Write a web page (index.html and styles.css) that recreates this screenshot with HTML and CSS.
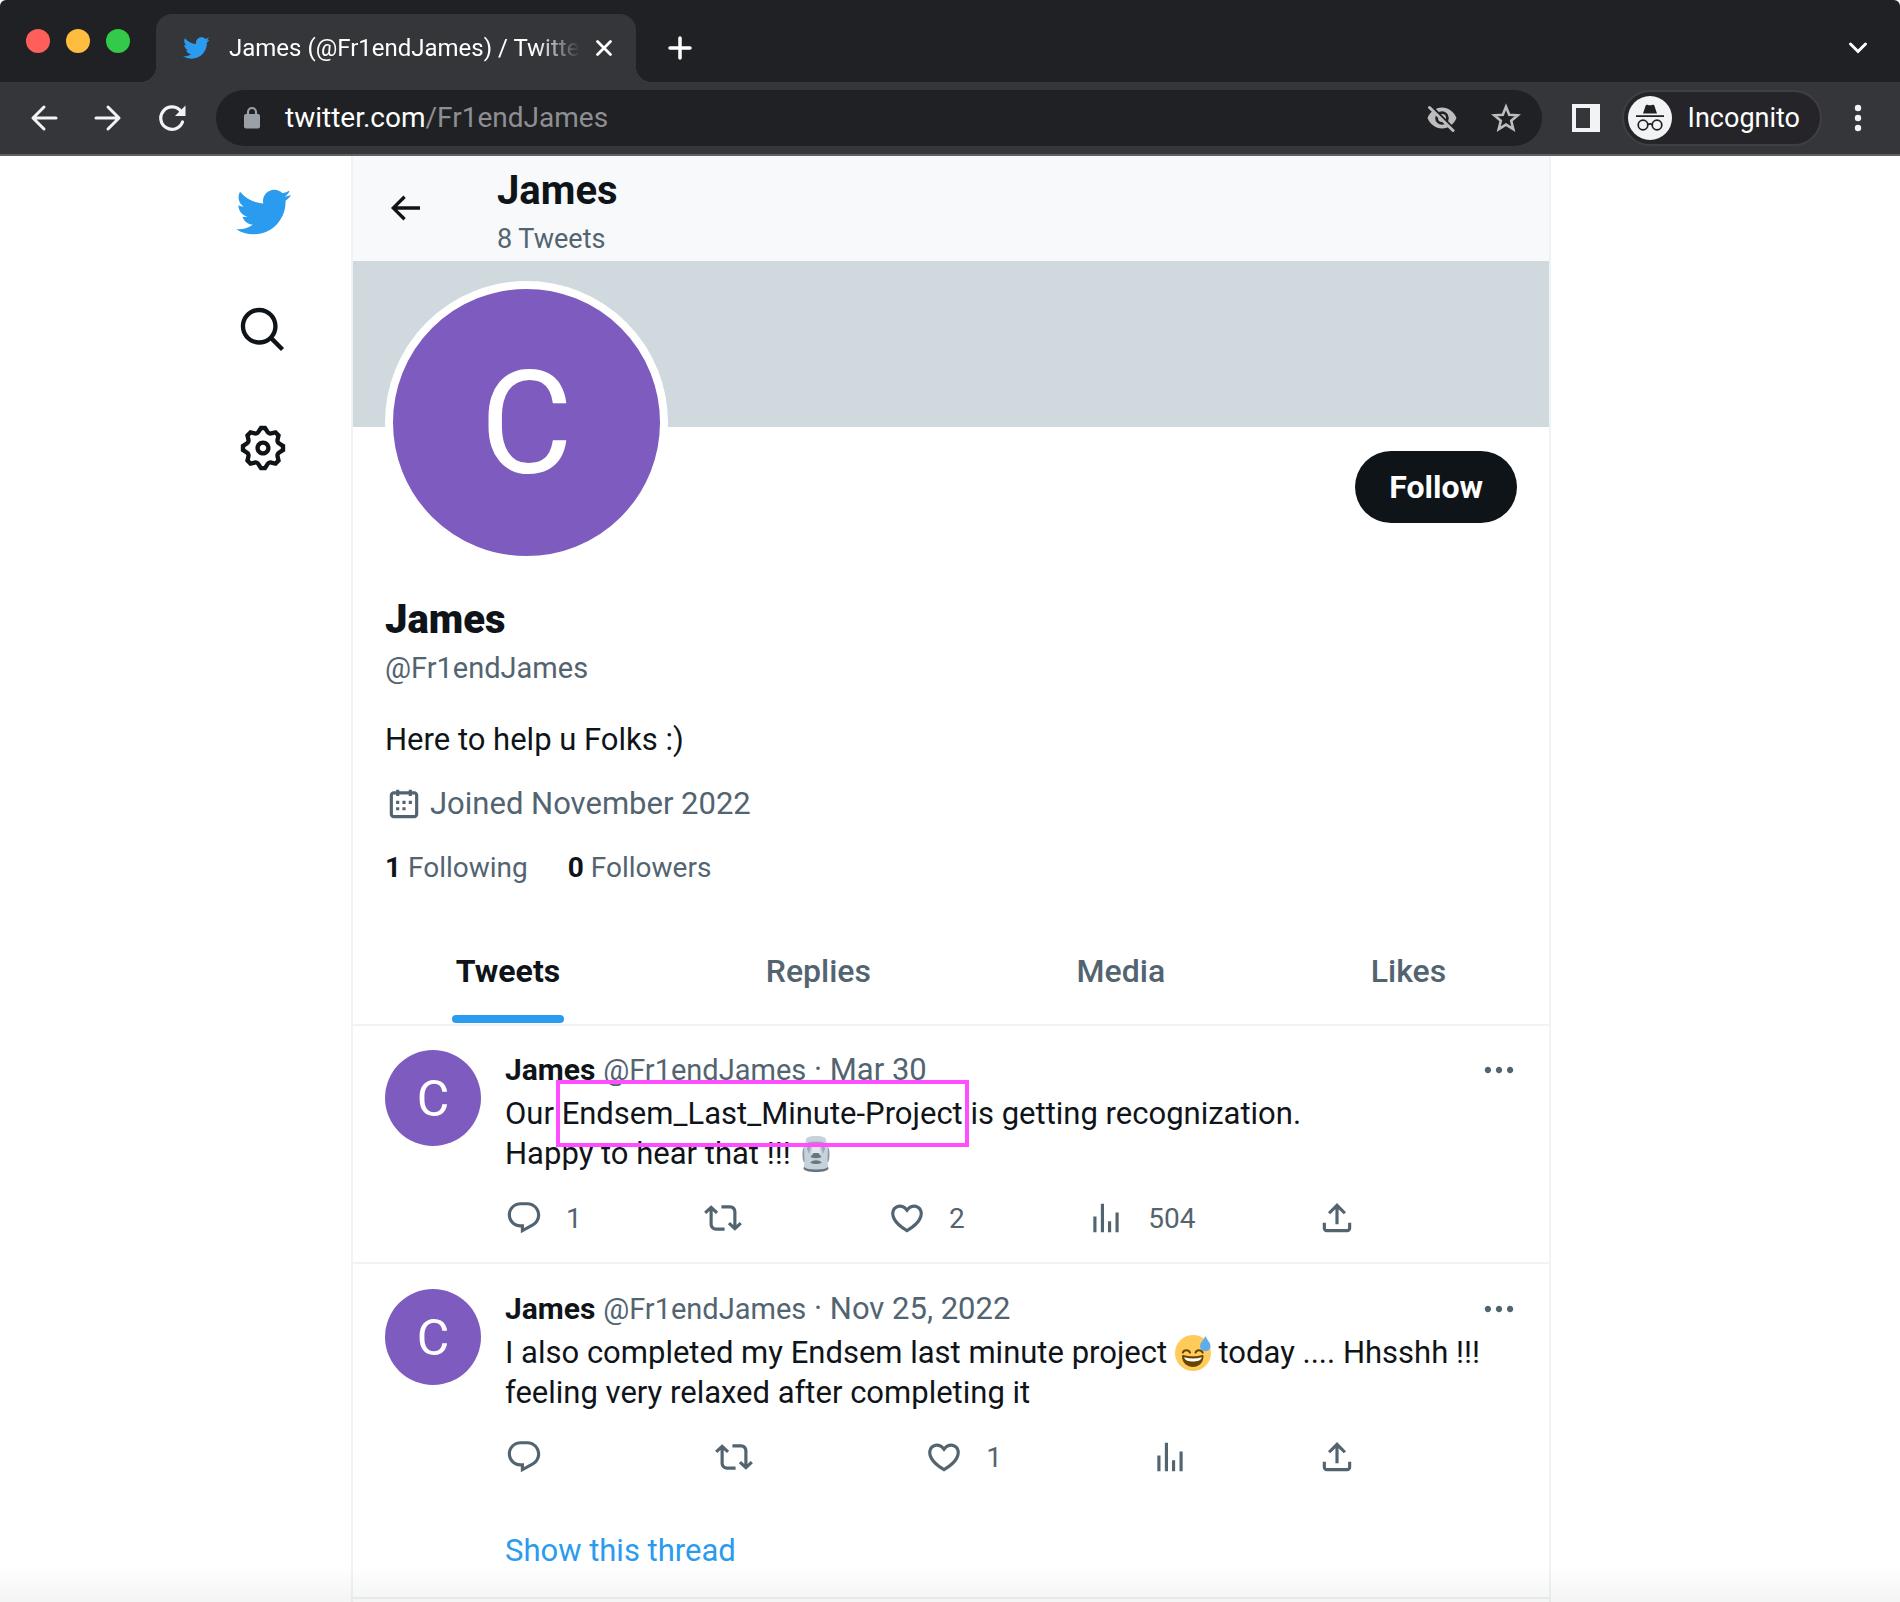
FILE: index.html
```html
<!DOCTYPE html>
<html lang="en">
<head>
<meta charset="utf-8">
<meta name="viewport" content="width=device-width, initial-scale=1">
<title>James (@Fr1endJames) / Twitter</title>
<link rel="stylesheet" href="styles.css">
</head>
<body>
<svg class="sprite" aria-hidden="true">
  <symbol id="bird" viewBox="0 0 24 24"><path d="M23.643 4.937c-.835.37-1.732.62-2.675.733.962-.576 1.7-1.49 2.048-2.578-.9.534-1.897.922-2.958 1.13-.85-.904-2.06-1.47-3.4-1.47-2.572 0-4.658 2.086-4.658 4.66 0 .364.042.718.12 1.06-3.873-.195-7.304-2.05-9.602-4.868-.4.69-.63 1.49-.63 2.342 0 1.616.823 3.043 2.072 3.878-.764-.025-1.482-.234-2.11-.583v.06c0 2.257 1.605 4.14 3.737 4.568-.392.106-.803.162-1.227.162-.3 0-.593-.028-.877-.082.593 1.85 2.313 3.198 4.352 3.234-1.595 1.25-3.604 1.995-5.786 1.995-.376 0-.747-.022-1.112-.065 2.062 1.323 4.51 2.093 7.14 2.093 8.57 0 13.255-7.098 13.255-13.254 0-.2-.005-.402-.014-.602.91-.658 1.7-1.477 2.323-2.41z"/></symbol>
  <symbol id="reply" viewBox="0 0 24 24"><path d="M1.751 10c0-4.42 3.584-8 8.005-8h4.366c4.49 0 8.129 3.64 8.129 8.13 0 2.96-1.607 5.68-4.196 7.11l-8.054 4.46v-3.69h-.067c-4.49.1-8.183-3.51-8.183-8.01zm8.005-6c-3.317 0-6.005 2.69-6.005 6 0 3.37 2.77 6.08 6.138 6.01l.351-.01h1.761v2.3l5.087-2.81c1.951-1.08 3.163-3.13 3.163-5.36 0-3.39-2.744-6.13-6.129-6.13H9.756z"/></symbol>
  <symbol id="retweet" viewBox="0 0 24 24"><path d="M4.5 3.88l4.432 4.14-1.364 1.46L5.5 7.55V16c0 1.1.896 2 2 2H13v2H7.5c-2.209 0-4-1.79-4-4V7.55L1.432 9.48.068 8.02 4.5 3.88zM16.5 6H11V4h5.5c2.209 0 4 1.79 4 4v8.45l2.068-1.93 1.364 1.46-4.432 4.14-4.432-4.14 1.364-1.46 2.068 1.93V8c0-1.1-.896-2-2-2z"/></symbol>
  <symbol id="heart" viewBox="0 0 24 24"><path d="M16.697 5.5c-1.222-.06-2.679.51-3.89 2.16l-.805 1.09-.806-1.09C9.984 6.01 8.526 5.44 7.304 5.5c-1.243.07-2.349.78-2.91 1.91-.552 1.12-.633 2.78.479 4.82 1.074 1.97 3.257 4.27 7.129 6.61 3.87-2.34 6.052-4.64 7.126-6.61 1.111-2.04 1.03-3.7.477-4.82-.561-1.13-1.666-1.84-2.908-1.91zm4.187 7.69c-1.351 2.48-4.001 5.12-8.379 7.67l-.503.3-.504-.3c-4.379-2.55-7.029-5.19-8.382-7.67-1.36-2.5-1.41-4.86-.514-6.67.887-1.79 2.647-2.91 4.601-3.01 1.651-.09 3.368.56 4.798 2.01 1.429-1.45 3.146-2.1 4.796-2.01 1.954.1 3.714 1.22 4.601 3.01.896 1.81.846 4.17-.514 6.67z"/></symbol>
  <symbol id="views" viewBox="0 0 24 24"><path d="M8.75 21V3h2v18h-2zM18 21V8.500h2V21h-2zM4 21l.004-10h2L6 21H4zm9.248 0v-7h2v7h-2z"/></symbol>
  <symbol id="share" viewBox="0 0 24 24"><path d="M12 2.590l5.700 5.700-1.410 1.420L13 6.410V16h-2V6.410l-3.300 3.300-1.410-1.420L12 2.590zM21 15l-.02 3.510c0 1.380-1.120 2.490-2.500 2.490H5.500C4.110 21 3 19.880 3 18.500V15h2v3.500c0 .28.22.5.5.5h12.980c.28 0 .5-.22.5-.5L19 15h2z"/></symbol>
  <symbol id="dots" viewBox="0 0 24 24"><path d="M3 12c0-1.100.9-2 2-2s2 .9 2 2-.9 2-2 2-2-.9-2-2zm9 2c1.100 0 2-.9 2-2s-.9-2-2-2-2 .9-2 2 .9 2 2 2zm7 0c1.100 0 2-.9 2-2s-.9-2-2-2-2 .9-2 2 .9 2 2 2z"/></symbol>
</svg>

<div class="tabstrip">
  <div class="lights"><span class="light red"></span><span class="light yellow"></span><span class="light green"></span></div>
  <div class="browser-tab">
    <svg class="favicon" aria-hidden="true"><use href="#bird"/></svg>
    <span class="tab-title">James (@Fr1endJames) / Twitter</span>
    <button class="bare tab-close" aria-label="Close tab"><svg width="18" height="18" viewBox="0 0 18 18" fill="none" stroke="currentColor" stroke-width="2.800" stroke-linecap="round"><path d="M2.500 2.500l13 13M15.500 2.500l-13 13"/></svg></button>
  </div>
  <button class="bare new-tab" aria-label="New tab"><svg width="24" height="24" viewBox="0 0 24 24" fill="none" stroke="currentColor" stroke-width="3.500" stroke-linecap="round"><path d="M12 2v20M2 12h20"/></svg></button>
  <button class="bare tab-menu" aria-label="Search tabs"><svg width="20" height="14" viewBox="0 0 20 14" fill="none" stroke="currentColor" stroke-width="3" stroke-linecap="round" stroke-linejoin="miter"><path d="M2.500 3l7.500 7.500L17.500 3"/></svg></button>
</div>

<div class="toolbar">
  <div class="history">
    <button class="bare tool" aria-label="Back"><svg width="28" height="28" viewBox="0 0 28 28" fill="none" stroke="currentColor" stroke-width="3" stroke-linecap="round" stroke-linejoin="round"><path d="M26 14H3M14 3L3 14l11 11"/></svg></button>
    <button class="bare tool" aria-label="Forward"><svg width="28" height="28" viewBox="0 0 28 28" fill="none" stroke="currentColor" stroke-width="3" stroke-linecap="round" stroke-linejoin="round"><path d="M2 14h23M14 3l11 11-11 11"/></svg></button>
    <button class="bare tool" aria-label="Reload"><svg width="28" height="28" viewBox="0 0 28 28"><path d="M24.500 18a11.200 11.200 0 1 1-1.500-10.500" fill="none" stroke="currentColor" stroke-width="3.200" stroke-linecap="round"/><path d="M27.500 1.500v10.500H17z" fill="currentColor"/></svg></button>
  </div>
  <div class="omnibox">
    <svg width="18" height="24" viewBox="0 0 18 24" aria-hidden="true"><rect x="1" y="8" width="16" height="14.500" rx="2" fill="#9aa0a6"/><path d="M5 9V6a4 4 0 0 1 8 0v3" fill="none" stroke="#9aa0a6" stroke-width="2.200"/></svg>
    <span class="url">twitter.com<span class="url-path">/Fr1endJames</span></span>
    <button class="bare omni-btn" aria-label="Third-party cookies blocked"><svg width="32" height="28" viewBox="0 0 32 28"><path fill="currentColor" fill-rule="evenodd" d="M16 3.500C22.500 3.500 28 7.800 30.500 14 28 20.200 22.500 24.500 16 24.500S4 20.200 1.500 14C4 7.800 9.500 3.500 16 3.500zM16 7.200a6.800 6.800 0 1 0 0 13.600 6.800 6.800 0 0 0 0-13.600zm0 2.800a4 4 0 1 1 0 8 4 4 0 0 1 0-8z"/><path d="M2 0l27 27" stroke="#202124" stroke-width="4"/><path d="M3.500 3.500L27 26.500" stroke="currentColor" stroke-width="3" stroke-linecap="round"/></svg></button>
    <button class="bare omni-btn" aria-label="Bookmark this tab"><svg width="32" height="32" viewBox="0 0 32 32" fill="none" stroke="currentColor" stroke-width="2.600"><path d="M16 4.800l3.200 7.900 8.500.6-6.500 5.500 2.100 8.300-7.300-4.500-7.300 4.500 2.100-8.300-6.500-5.500 8.500-.6z"/></svg></button>
  </div>
  <button class="bare tool side-panel" aria-label="Side panel"><svg width="28" height="28" viewBox="0 0 28 28"><path fill="currentColor" fill-rule="evenodd" d="M0 0h28v28H0zM4 4v20h14V4z"/></svg></button>
  <button class="incognito"><svg width="44" height="44" viewBox="0 0 44 44" aria-hidden="true"><circle cx="22" cy="22" r="22" fill="#f1f3f4"/><path d="M15 17.500l2.600-7.800c.3-.9 1-1.200 1.800-.9 1.700.7 3.500.7 5.200 0 .8-.3 1.500 0 1.800.9l2.600 7.800zM8 19.200h28v1.900H8z" fill="#202124"/><g fill="none" stroke="#202124" stroke-width="1.700"><circle cx="15" cy="29" r="4.800"/><circle cx="29" cy="29" r="4.800"/><path d="M19.800 28.500q2.200-1.400 4.400 0"/></g></svg><span>Incognito</span></button>
  <button class="bare tool" aria-label="Menu"><svg width="8" height="28" viewBox="0 0 8 28" fill="currentColor"><circle cx="4" cy="4" r="3.200"/><circle cx="4" cy="14" r="3.200"/><circle cx="4" cy="24" r="3.200"/></svg></button>
</div>

<div class="page">
  <nav class="side-nav" aria-label="Primary">
    <a class="nav-item logo" href="#" aria-label="Twitter"><svg><use href="#bird"/></svg></a>
    <a class="nav-item" href="#" aria-label="Explore"><svg viewBox="0 0 24 24"><path d="M10.250 3.750c-3.590 0-6.500 2.910-6.500 6.500s2.910 6.500 6.500 6.500c1.795 0 3.419-.726 4.596-1.904 1.178-1.177 1.904-2.801 1.904-4.596 0-3.590-2.910-6.500-6.500-6.500zm-8.500 6.500c0-4.694 3.806-8.500 8.500-8.500s8.500 3.806 8.500 8.500c0 1.986-.682 3.815-1.824 5.262l4.781 4.781-1.414 1.414-4.781-4.781c-1.447 1.142-3.276 1.824-5.262 1.824-4.694 0-8.500-3.806-8.500-8.500z"/></svg></a>
    <a class="nav-item" href="#" aria-label="Settings"><svg viewBox="0 0 24 24"><path d="M10.540 1.750h2.920l1.570 2.360c.11.17.32.25.53.21l2.530-.59 2.170 2.170-.58 2.540c-.05.2.04.41.21.53l2.360 1.570v2.920l-2.360 1.570c-.17.12-.26.33-.21.53l.58 2.540-2.170 2.170-2.530-.59c-.21-.04-.42.04-.53.21l-1.570 2.360h-2.920l-1.580-2.360c-.11-.17-.32-.25-.52-.21l-2.540.59-2.170-2.170.58-2.540c.05-.2-.03-.41-.21-.53l-2.350-1.570v-2.920L4.100 8.970c.18-.12.26-.33.21-.53L3.730 5.900 5.900 3.730l2.540.59c.2.04.41-.04.52-.21l1.580-2.360zm1.070 2l-.98 1.470C10.050 6.080 9 6.500 7.990 6.270l-1.460-.34-.6.6.33 1.460c.24 1.010-.18 2.070-1.050 2.640l-1.460.98v.78l1.460.98c.87.57 1.290 1.630 1.050 2.640l-.33 1.460.6.6 1.460-.34c1.010-.23 2.060.19 2.640 1.050l.98 1.470h.78l.97-1.470c.58-.86 1.630-1.280 2.650-1.050l1.450.34.61-.6-.34-1.460c-.23-1.010.18-2.070 1.050-2.640l1.470-.98v-.78l-1.470-.98c-.87-.57-1.280-1.630-1.050-2.640l.34-1.460-.61-.6-1.450.34c-1.020.23-2.070-.19-2.650-1.050l-.97-1.470h-.78zM12 10.500c-.83 0-1.500.67-1.500 1.500s.67 1.500 1.500 1.500c.82 0 1.500-.67 1.500-1.500s-.68-1.500-1.500-1.500zM8.500 12c0-1.930 1.560-3.500 3.500-3.500 1.930 0 3.500 1.570 3.500 3.500s-1.570 3.500-3.500 3.500c-1.940 0-3.500-1.570-3.500-3.500z"/></svg></a>
  </nav>

  <main class="column">
    <header class="column-head">
      <button class="bare back" aria-label="Back"><svg width="40" height="40" viewBox="0 0 24 24" fill="currentColor"><path d="M7.414 13l5.043 5.040-1.414 1.420L3.586 12l7.457-7.460 1.414 1.420L7.414 11H21v2H7.414z"/></svg></button>
      <div>
        <h1 class="head-name">James</h1>
        <p class="head-count">8 Tweets</p>
      </div>
    </header>
    <div class="banner"></div>

    <section class="profile">
      <div class="profile-top">
        <div class="avatar avatar-large">C</div>
        <button class="follow">Follow</button>
      </div>
      <h2 class="profile-name">James</h2>
      <p class="handle">@Fr1endJames</p>
      <p class="bio">Here to help u Folks :)</p>
      <p class="joined"><svg width="38" height="38" viewBox="0 0 24 24" fill="currentColor" aria-hidden="true"><path d="M7 4V3h2v1h6V3h2v1h1.500C19.890 4 21 5.120 21 6.500v12c0 1.380-1.110 2.500-2.500 2.500h-13C4.120 21 3 19.880 3 18.500v-12C3 5.120 4.120 4 5.500 4H7zm0 2H5.500c-.27 0-.5.22-.5.5v12c0 .28.23.5.5.5h13c.28 0 .5-.22.5-.5v-12c0-.28-.22-.5-.5-.5H17v1h-2V6H9v1H7V6zm0 6h2v-2H7v2zm0 4h2v-2H7v2zm4-4h2v-2h-2v2zm0 4h2v-2h-2v2zm4-4h2v-2h-2v2z"/></svg><span>Joined November 2022</span></p>
      <div class="stats">
        <a href="#"><b>1</b> Following</a>
        <a href="#"><b>0</b> Followers</a>
      </div>
    </section>

    <nav class="tabs" aria-label="Profile timelines">
      <a class="tab active" href="#"><span>Tweets</span></a>
      <a class="tab" href="#"><span>Replies</span></a>
      <a class="tab" href="#"><span>Media</span></a>
      <a class="tab" href="#"><span>Likes</span></a>
    </nav>

    <article class="tweet">
      <div class="avatar">C</div>
      <div class="tweet-main">
        <div class="tweet-head">
          <p class="byline"><b>James</b> <span class="byline-handle">@Fr1endJames</span> <span>·</span> <a href="#">Mar 30</a></p>
          <button class="bare more" aria-label="More"><svg><use href="#dots"/></svg></button>
        </div>
        <p class="tweet-text">Our <mark class="marked">Endsem_Last_Minute-Project</mark> is getting recognization.<br>Happy to hear that !!! <svg class="emoji" viewBox="0 0 36 36" role="img" aria-label="moai"><path fill="#66757f" d="M5.500 32L7 28h22l1.500 4c.3 2.500-5 4-12.500 4S5.200 34.500 5.500 32z"/><path fill="#8899a6" d="M7 10c-2 1-2.500 5-2.500 8.500S5 26 6.500 26.500L8 26V10zM29 10c2 1 2.500 5 2.500 8.500S31 26 29.500 26.500L28 26V10z"/><path fill="#c6d2da" d="M8 4c0-3 4-4 10-4s10 1 10 4l2 8-.5 12 .5 7c-2 1.800-6 2.500-12 2.500S8 32.800 6 31l.5-7L6 12z"/><path fill="#99a9b5" d="M10 6.500c3-1.300 13-1.300 16 0l1 6.500-2 5-2-8H13l-2 8-2-5z"/><path fill="#e1e8ed" d="M15 8h6l1.500 10-2.500 2h-4l-2.500-2z"/><path fill="#66757f" d="M15.500 17h5l3 4q-5.500 2.500-11 0zM12 26.500q6-4.500 12 0-6 3-12 0z"/></svg></p>
        <div class="actions">
          <button class="bare action" aria-label="Reply"><svg><use href="#reply"/></svg><span class="count">1</span></button>
          <button class="bare action" aria-label="Retweet"><svg><use href="#retweet"/></svg><span class="count"></span></button>
          <button class="bare action" aria-label="Like"><svg><use href="#heart"/></svg><span class="count">2</span></button>
          <button class="bare action" aria-label="Views"><svg><use href="#views"/></svg><span class="count">504</span></button>
          <button class="bare action" aria-label="Share"><svg><use href="#share"/></svg></button>
        </div>
      </div>
    </article>

    <article class="tweet">
      <div class="avatar">C</div>
      <div class="tweet-main">
        <div class="tweet-head">
          <p class="byline"><b>James</b> <span class="byline-handle">@Fr1endJames</span> <span>·</span> <a href="#">Nov 25, 2022</a></p>
          <button class="bare more" aria-label="More"><svg><use href="#dots"/></svg></button>
        </div>
        <p class="tweet-text">I also completed my Endsem last minute project <svg class="emoji" viewBox="0 0 36 36" role="img" aria-label="grinning face with sweat"><circle cx="18" cy="18" r="18" fill="#ffcc5c"/><path fill="#664500" d="M28.500 21c0 7-5 11-10.500 11S7 28 7 21c0-.7.400-1.200 1.200-1 6 1.800 13.300 1.800 19.200 0 .8-.2 1.100.3 1.100 1z"/><path fill="#fff" d="M9.200 22.200c6 1.600 11.600 1.600 17.500 0-.3 3.300-4.700 4.300-8.700 4.300s-8.500-1-8.800-4.300z"/><g fill="none" stroke="#664500" stroke-width="2" stroke-linecap="round"><path d="M7.800 17.600c1-3.300 6-3.300 7.200 0M20.500 17.600c1-3.300 6-3.300 7.200 0"/></g><path fill="#5dadec" d="M35.500 11c0 3-2 5.200-5.200 5.200s-5.200-2.200-5.200-5.200c0-3.500 3.400-5.500 4.800-9.200.2-.5.700-.5.900 0 1.400 3.700 4.700 5.700 4.700 9.200z"/></svg> today .... Hhsshh !!!<br>feeling very relaxed after completing it</p>
        <div class="actions">
          <button class="bare action" aria-label="Reply"><svg><use href="#reply"/></svg><span class="count"></span></button>
          <button class="bare action" aria-label="Retweet"><svg><use href="#retweet"/></svg><span class="count"></span></button>
          <button class="bare action" aria-label="Like"><svg><use href="#heart"/></svg><span class="count">1</span></button>
          <button class="bare action" aria-label="Views"><svg><use href="#views"/></svg></button>
          <button class="bare action" aria-label="Share"><svg><use href="#share"/></svg></button>
        </div>
        <a class="thread-link" href="#">Show this thread</a>
      </div>
    </article>
  </main>
</div>
</body>
</html>
```
FILE: styles.css
```css
* { box-sizing: border-box; }

html { height: 100%; }

body {
  margin: 0;
  min-height: 100%;
  display: flex;
  flex-direction: column;
  position: relative;
  background: #fff;
  color: #0f1419;
  font-family: Roboto, "Liberation Sans", sans-serif;
  font-size: 31px;
  line-height: 40px;
}

/* Soft shade along the bottom edge of the window */
body::after {
  content: "";
  position: absolute;
  inset: auto 0 0;
  height: 36px;
  background: linear-gradient(rgba(60, 70, 70, 0), rgba(60, 70, 70, 0.06));
  pointer-events: none;
}

h1, h2, p { margin: 0; }
a { color: inherit; text-decoration: none; }
button { font: inherit; cursor: pointer; }
svg { display: block; flex: none; }
.sprite { position: absolute; width: 0; height: 0; }

.bare {
  display: flex;
  align-items: center;
  justify-content: center;
  padding: 0;
  border: 0;
  background: none;
  color: inherit;
}

/* Browser window */
.tabstrip {
  display: flex;
  align-items: flex-end;
  height: 82px;
  padding-right: 22px;
  border-radius: 6px 6px 0 0;
  background: #202124;
  color: #fff;
}

.lights {
  display: flex;
  align-self: flex-start;
  gap: 16px;
  width: 156px;
  padding: 29px 0 0 26px;
}
.light { width: 24px; height: 24px; border-radius: 50%; }
.red { background: #fe5f5a; }
.yellow { background: #febd3f; }
.green { background: #33c949; }

.browser-tab {
  position: relative;
  display: flex;
  align-items: center;
  width: 480px;
  height: 68px;
  padding: 0 20px 0 26px;
  border-radius: 16px 16px 0 0;
  background: #35363a;
}
.browser-tab::before,
.browser-tab::after {
  content: "";
  position: absolute;
  bottom: 0;
  width: 16px;
  height: 16px;
}
.browser-tab::before {
  right: 100%;
  background: radial-gradient(circle at 0 0, transparent 16px, #35363a 16px);
}
.browser-tab::after {
  left: 100%;
  background: radial-gradient(circle at 100% 0, transparent 16px, #35363a 16px);
}
.favicon { width: 28px; height: 28px; fill: #2a9bee; }
.tab-title {
  flex: 1;
  min-width: 0;
  margin: 0 12px 0 19px;
  overflow: hidden;
  white-space: nowrap;
  font-size: 24px;
  mask-image: linear-gradient(90deg, #000 calc(100% - 44px), transparent);
}
.tab-close { width: 24px; height: 24px; }
.new-tab { width: 88px; height: 68px; }
.tab-menu { width: 40px; height: 68px; margin-left: auto; }

.toolbar {
  display: flex;
  align-items: center;
  height: 74px;
  padding: 0 22px 0 24px;
  border-bottom: 2px solid #605f64;
  background: #35363a;
  color: #f1f3f4;
}
.history { display: flex; gap: 24px; }
.tool { width: 40px; height: 40px; }

.omnibox {
  flex: 1;
  display: flex;
  align-items: center;
  gap: 24px;
  height: 56px;
  margin: 0 24px;
  padding: 0 16px 0 27px;
  border-radius: 28px;
  background: #202124;
  color: #fff;
  font-size: 28px;
}
.url { flex: 1; }
.url-path { color: #8e8f92; }
.omni-btn { width: 40px; height: 40px; color: #bdbdbd; }

.incognito {
  display: flex;
  align-items: center;
  gap: 16px;
  height: 56px;
  margin: 0 16px;
  padding: 0 20px 0 4px;
  border: 2px solid #3f4045;
  border-radius: 28px;
  background: #252529;
  color: #fff;
  font-size: 27px;
}

/* Page */
.page {
  flex: 1;
  display: grid;
  grid-template-columns: 1fr minmax(0, 1200px) 1fr;
  padding-left: 2px;
}

.side-nav {
  display: flex;
  flex-direction: column;
  align-items: flex-end;
  gap: 14px;
  padding: 4px 36px 0 0;
}
.nav-item {
  display: flex;
  align-items: center;
  justify-content: center;
  width: 104px;
  height: 104px;
}
.nav-item svg { width: 52px; height: 52px; fill: #0f1419; }
.logo svg { width: 58px; height: 58px; fill: #2a9bee; }

.column {
  border: solid #eff3f4;
  border-width: 0 2px;
}

.column-head {
  display: flex;
  align-items: center;
  gap: 72px;
  padding: 10px 32px 4px;
  background: #f7f9fa;
}
.back { margin-bottom: 8px; }
.head-name { font-size: 40px; line-height: 50px; }
.head-count {
  margin-top: 5px;
  color: #536471;
  font-size: 27px;
  line-height: 36px;
}

.banner { height: 166px; background: #cfd9de; }

.avatar {
  display: flex;
  flex: none;
  align-items: center;
  justify-content: center;
  width: 96px;
  height: 96px;
  padding-top: 2px;
  border-radius: 50%;
  background: #7e5bbf;
  color: #fff;
  font-size: 50px;
}
.avatar-large {
  width: 283px;
  height: 283px;
  margin-top: -170px;
  padding-top: 4px;
  border: 8px solid #fff;
  font-size: 142px;
}

.profile { padding: 24px 32px 30px; }
.profile-top {
  display: flex;
  align-items: flex-start;
  justify-content: space-between;
}
.follow {
  height: 72px;
  padding: 0 34px;
  border: 0;
  border-radius: 36px;
  background: #0f1419;
  color: #fff;
  font-size: 32px;
  font-weight: 700;
}
.profile-name {
  margin-top: 32px;
  font-size: 40px;
  font-weight: 900;
  line-height: 48px;
}
.handle {
  margin-top: 4px;
  color: #536471;
  font-size: 29px;
}
.bio { margin-top: 32px; }
.joined {
  display: flex;
  align-items: center;
  gap: 7px;
  margin-top: 24px;
  color: #536471;
}
.stats {
  display: flex;
  gap: 40px;
  margin-top: 24px;
  color: #536471;
  font-size: 28px;
}
.stats b { color: #0f1419; }

.tabs {
  display: flex;
  height: 108px;
  border-bottom: 2px solid #eff3f4;
  color: #536471;
  font-size: 32px;
  font-weight: 500;
}
.tab {
  flex: 1 1 auto;
  display: flex;
  justify-content: center;
}
.tab span {
  display: flex;
  align-items: center;
  margin-bottom: 1px;
  padding: 9px 4px 0;
  border-bottom: 8px solid transparent;
}
.active { color: #0f1419; font-weight: 700; }
.active span { position: relative; }
.active span::after {
  content: "";
  position: absolute;
  inset: auto 0 -8px;
  height: 8px;
  border-radius: 4px;
  background: #2a9bee;
}

.tweet {
  display: flex;
  gap: 24px;
  padding: 24px 32px;
  border-bottom: 2px solid #eff3f4;
}
.tweet + .tweet { padding: 25px 32px 23px; }
.tweet-main { flex: 1; min-width: 0; }
.tweet-head {
  display: flex;
  justify-content: space-between;
}
.byline { color: #536471; }
.byline b { color: #0f1419; font-size: 30px; }
.byline-handle { font-size: 29px; }
.more { height: 40px; margin-right: -1px; }
.more svg,
.action svg { width: 38px; height: 38px; fill: #536471; }
.tweet-text { margin-top: 4px; }

.marked {
  position: relative;
  background: none;
  color: inherit;
}
.marked::after {
  content: "";
  position: absolute;
  inset: -15px -6px;
  border: 4px solid #ff4dff;
}
.emoji {
  display: inline-block;
  width: 36px;
  height: 36px;
  vertical-align: -8px;
}

.actions {
  display: flex;
  justify-content: space-between;
  max-width: 851px;
  margin-top: 24px;
}
.action {
  height: 40px;
  color: #536471;
  font-size: 28px;
}
.count { padding: 1px 20px 0 23px; }

.thread-link {
  display: block;
  margin: 54px 0 3px;
  color: #2a9bee;
}
```
